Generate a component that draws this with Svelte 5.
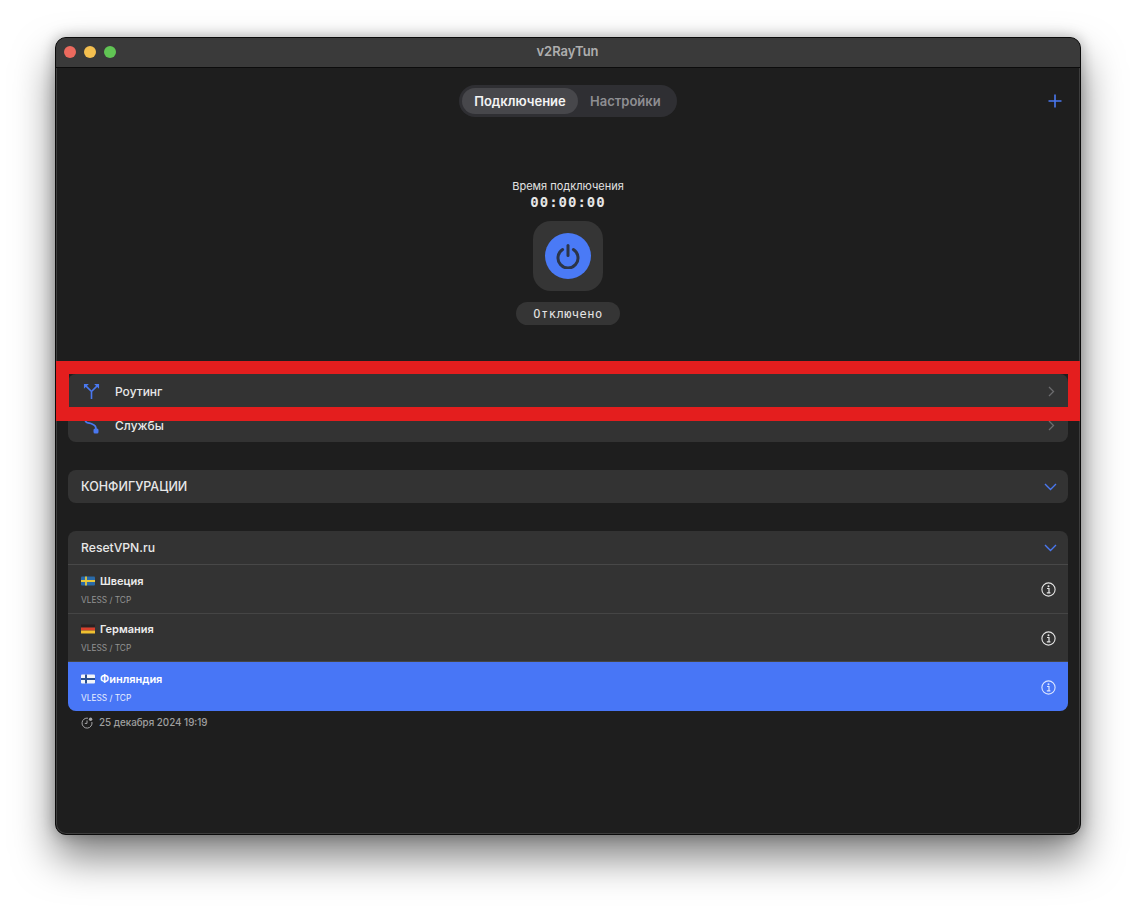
<script>
  const servers = [
    { name: 'Швеция', flag: 'se' },
    { name: 'Германия', flag: 'de' },
    { name: 'Финляндия', flag: 'fi', active: true }
  ];
</script>

<div class="page">
  <div class="window">
    <header class="titlebar">
      <div class="lights"><i class="red"></i><i class="yellow"></i><i class="green"></i></div>
      <span class="title">v2RayTun</span>
    </header>

    <main class="content">
      <div class="topbar">
        <div class="tabs">
          <span class="tab active">Подключение</span>
          <span class="tab">Настройки</span>
        </div>
        <svg class="plus" width="14" height="14" viewBox="0 0 14 14"><path d="M7 .5v13M.5 7h13" stroke="#4a78f0" stroke-width="1.6" fill="none"/></svg>
      </div>

      <section class="hero">
        <div class="label">Время подключения</div>
        <div class="timer">00:00:00</div>
        <div class="tile">
          <div class="power">
            <svg width="26" height="26" viewBox="0 0 26 26" fill="none" stroke="#2b3448" stroke-width="3" stroke-linecap="round">
              <path d="M13 2.500v10"/>
              <path d="M7.600 6.600a10 10 0 1 0 10.800 0"/>
            </svg>
          </div>
        </div>
        <div class="status">Отключено</div>
      </section>

      <section class="card nav">
        <div class="row nav-row">
          <svg class="nav-icon y-icon" width="17" height="17" viewBox="0 0 18 18" fill="none" stroke="#4a78f0" stroke-width="1.700">
            <path d="M9 17V9L3 3M9 9l6-6"/>
            <path d="M1 1h5.200L1 6.200zM17 1h-5.200L17 6.200z" fill="#4a78f0" stroke="none"/>
          </svg>
          <span class="grow">Роутинг</span>
          <svg class="chev" width="7" height="11" viewBox="0 0 7 11" fill="none" stroke="#6c6c6e" stroke-width="1.300"><path d="M1 1l4.500 4.500L1 10"/></svg>
        </div>
        <div class="row nav-row">
          <svg class="nav-icon" width="18" height="18" viewBox="0 0 18 18" fill="none" stroke="#4a78f0" stroke-width="1.800">
            <path d="M2 2c0 6 3.500 4.500 7 6s4 2.500 4 6"/>
            <rect x="10.500" y="12.500" width="5" height="5" rx="1.500" fill="#4a78f0" stroke="none"/>
          </svg>
          <span class="grow">Службы</span>
          <svg class="chev" width="7" height="11" viewBox="0 0 7 11" fill="none" stroke="#6c6c6e" stroke-width="1.300"><path d="M1 1l4.500 4.500L1 10"/></svg>
        </div>
      </section>

      <section class="card config">
        <div class="row head">
          <span class="grow">КОНФИГУРАЦИИ</span>
          <svg width="13" height="8" viewBox="0 0 13 8" fill="none" stroke="#4a78f0" stroke-width="1.400"><path d="M1 1l5.500 5.500L12 1"/></svg>
        </div>
      </section>

      <section class="card group">
        <div class="row head group-head">
          <span class="grow">ResetVPN.ru</span>
          <svg width="13" height="8" viewBox="0 0 13 8" fill="none" stroke="#4a78f0" stroke-width="1.400"><path d="M1 1l5.500 5.500L12 1"/></svg>
        </div>
        {#each servers as s}
          <div class="server" class:selected={s.active}>
            <div class="grow text">
              <div class="sname">
                <svg class="flag" width="14" height="10" viewBox="0 0 14 10">
                  {#if s.flag === 'se'}
                    <rect y=".5" width="14" height="9" rx="1" fill="#2a6aa8"/>
                    <path d="M0 5h14M5 .5v9" stroke="#e8c83c" stroke-width="1.800"/>
                  {:else if s.flag === 'de'}
                    <rect y=".5" width="14" height="3" fill="#2a2222"/>
                    <rect y="3.500" width="14" height="3" fill="#d8402c"/>
                    <rect y="6.500" width="14" height="3" fill="#f0c030"/>
                  {:else}
                    <rect y=".5" width="14" height="9" rx="1" fill="#f2f4f8"/>
                    <path d="M0 5h14M5 .5v9" stroke="#2a4f92" stroke-width="2"/>
                  {/if}
                </svg>
                <span>{s.name}</span>
              </div>
              <div class="proto">VLESS / TCP</div>
            </div>
            <svg class="info" width="15" height="15" viewBox="0 0 15 15" fill="none">
              <circle cx="7.500" cy="7.500" r="6.600" stroke="currentColor" stroke-width="1.100"/>
              <circle cx="7.500" cy="4.200" r="1" fill="currentColor"/>
              <path d="M6 6.500h2v4M5.800 10.800h3.600" stroke="currentColor" stroke-width="1.200"/>
            </svg>
          </div>
        {/each}
      </section>

      <div class="updated">
        <svg width="12" height="12" viewBox="0 0 12 12" fill="none" stroke="#a5a5a7" stroke-width="1">
          <path d="M7 1.200A5 5 0 1 0 10.900 5"/>
          <path d="M6 3.400V6.400H3.800"/>
          <circle cx="9.600" cy="2.200" r="1.700" fill="#a5a5a7" stroke="none"/>
        </svg>
        <span>25 декабря 2024 19:19</span>
      </div>
    </main>

    <div class="highlight"></div>
  </div>
</div>

<style>
  :global(body) {
    margin: 0;
    background: #fff;
  }
  .page {
    width: 1136px;
    height: 907px;
    padding: 37px 0 0 55px;
    box-sizing: border-box;
    overflow: hidden;
    font-family: Inter, "Liberation Sans", sans-serif;
  }
  .window {
    position: relative;
    width: 1026px;
    height: 798px;
    box-sizing: border-box;
    border-radius: 11px;
    background: #1e1e1e;
    border: 1px solid #0b0b0b;
    box-shadow: 0 0 0 1px rgba(120, 120, 120, .35) inset, 0 22px 40px rgba(0, 0, 0, .5), 0 0 14px rgba(0, 0, 0, .28);
    display: flex;
    flex-direction: column;
  }
  .titlebar {
    height: 30px;
    flex: none;
    position: relative;
    display: flex;
    align-items: center;
    justify-content: center;
    padding-bottom: 3px;
    box-sizing: border-box;
    background: #3a3a3a;
    border-bottom: 1px solid #0c0c0c;
    border-radius: 10px 10px 0 0;
  }
  .lights {
    position: absolute;
    left: 8px;
    top: 8px;
    display: flex;
    gap: 8px;
  }
  .lights i {
    width: 12px;
    height: 12px;
    border-radius: 50%;
  }
  .red { background: #ec6a5e; }
  .yellow { background: #f4bf4f; }
  .green { background: #61c554; }
  .title {
    font-size: 13px;
    font-weight: 600;
    color: #aeaeae;
    margin-left: -1px;
  }
  .content {
    padding: 0 12px;
    display: flex;
    flex-direction: column;
    flex: 1;
  }
  .topbar {
    position: relative;
    display: flex;
    justify-content: center;
    padding-top: 17px;
  }
  .tabs {
    display: flex;
    align-items: center;
    width: 218px;
    height: 32px;
    box-sizing: border-box;
    padding: 0 3px;
    background: #2f2f33;
    border-radius: 16px;
  }
  .tab {
    height: 26px;
    line-height: 26px;
    text-align: center;
    font-size: 13px;
    font-weight: 600;
    color: #8e8e92;
    padding: 0 12px;
    white-space: nowrap;
  }
  .tab.active {
    width: 116px;
    box-sizing: border-box;
    padding: 0;
    background: #47474b;
    border-radius: 13px;
    color: #f4f4f4;
  }
  .plus {
    position: absolute;
    right: 6px;
    top: 26px;
  }
  .hero {
    display: flex;
    flex-direction: column;
    align-items: center;
    padding-top: 62px;
    height: 257px;
    box-sizing: border-box;
  }
  .label {
    font-size: 11px;
    line-height: 14px;
    color: #e2e2e2;
  }
  .timer {
    font-family: "DejaVu Sans Mono", monospace;
    font-size: 14px;
    font-weight: 700;
    line-height: 18px;
    letter-spacing: 1px;
    color: #e6e6e6;
  }
  .tile {
    margin-top: 10px;
    width: 70px;
    height: 70px;
    border-radius: 18px;
    background: #353535;
    display: flex;
    align-items: center;
    justify-content: center;
  }
  .power {
    width: 46px;
    height: 46px;
    border-radius: 50%;
    background: #4a7af6;
    display: flex;
    align-items: center;
    justify-content: center;
  }
  .status {
    margin-top: 11px;
    width: 104px;
    height: 23px;
    line-height: 24px;
    text-align: center;
    border-radius: 12px;
    background: #353535;
    color: #e4e4e4;
    font-family: "DejaVu Sans Mono", monospace;
    font-size: 12px;
    letter-spacing: .5px;
  }
  .card {
    background: #333333;
    border-radius: 8px;
    overflow: hidden;
    color: #e8e8e8;
    font-size: 12px;
  }
  .row {
    display: flex;
    align-items: center;
    box-sizing: border-box;
  }
  .grow {
    flex: 1;
  }
  .nav-row {
    height: 34px;
    padding: 0 13px 0 15px;
    font-weight: 500;
  }
  .nav-icon {
    margin-right: 14px;
  }
  .y-icon {
    margin-right: 15px;
  }
  .head {
    height: 33px;
    padding: 0 11px 0 13px;
    font-size: 12.5px;
    font-weight: 500;
  }
  .config {
    margin-top: 28px;
  }
  .group {
    margin-top: 28px;
  }
  .group-head {
    height: 34px;
    font-size: 12.2px;
    border-bottom: 1px solid #484848;
  }
  .server {
    height: 48.67px;
    box-sizing: border-box;
    display: flex;
    align-items: center;
    padding: 0 12px 0 13px;
    border-bottom: 1px solid #454545;
    color: #ececec;
  }
  .server.selected {
    background: #4876f6;
    border-bottom: 0;
    color: #fff;
  }
  .text {
    padding-top: 2px;
  }
  .sname {
    display: flex;
    align-items: center;
    gap: 5px;
    font-size: 11px;
    font-weight: 600;
    line-height: 14px;
  }
  .proto {
    margin-top: 7px;
    font-size: 8.3px;
    font-weight: 400;
    line-height: 11px;
    color: #949494;
  }
  .selected .proto {
    color: #e8eeff;
  }
  .info {
    margin-top: 2px;
    color: #e4e4e4;
  }
  .selected .info {
    color: #dbe5ff;
  }
  .updated {
    display: flex;
    align-items: center;
    gap: 6px;
    margin: 6px 0 0 13px;
    font-size: 9.8px;
    font-weight: 500;
    line-height: 12px;
    color: #a0a0a0;
  }
  .highlight {
    position: absolute;
    left: 0;
    top: 323px;
    width: 1024px;
    height: 60px;
    box-sizing: border-box;
    border: solid #e41e1e;
    border-width: 13px 12px 14px 13px;
  }
</style>
